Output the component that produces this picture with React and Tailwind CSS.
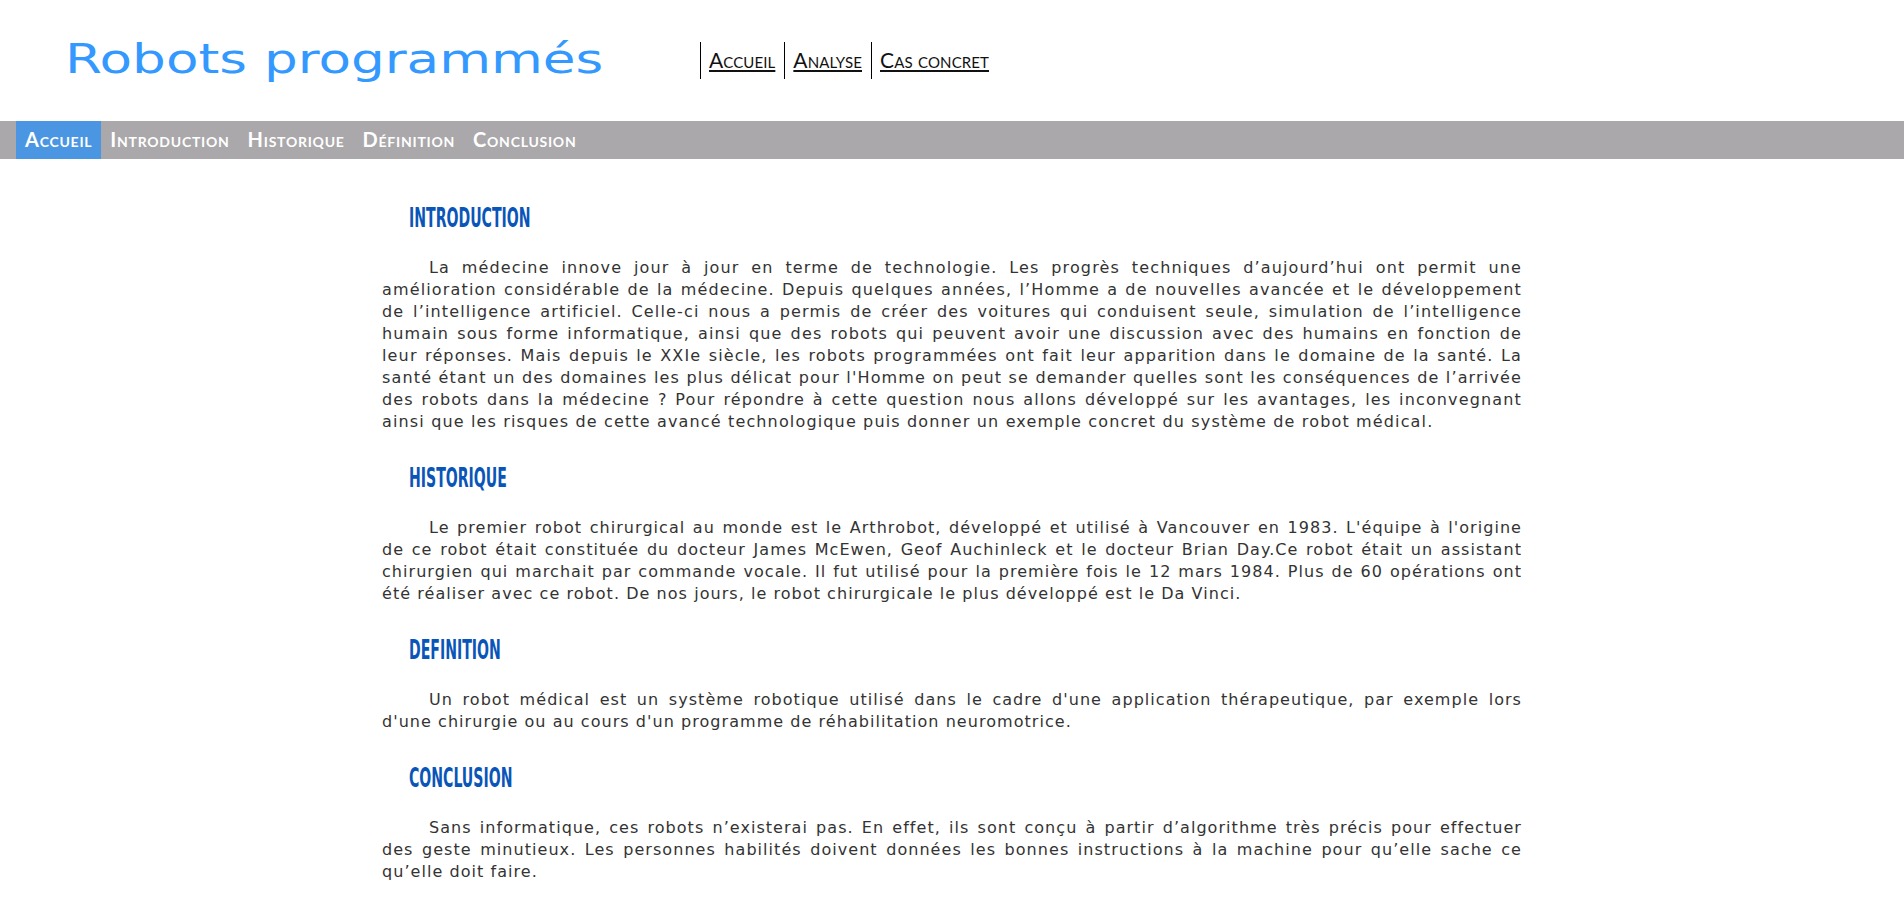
import React from 'react';

const sections = [
  {
    title: 'Introduction',
    track: 'tracking-[1.15px]',
    text: "La médecine innove jour à jour en terme de technologie. Les progrès techniques d’aujourd’hui ont permit une amélioration considérable de la médecine. Depuis quelques années, l’Homme a de nouvelles avancée et le développement de l’intelligence artificiel. Celle-ci nous a permis de créer des voitures qui conduisent seule, simulation de l’intelligence humain sous forme informatique, ainsi que des robots qui peuvent avoir une discussion avec des humains en fonction de leur réponses. Mais depuis le XXIe siècle, les robots programmées ont fait leur apparition dans le domaine de la santé. La santé étant un des domaines les plus délicat pour l'Homme on peut se demander quelles sont les conséquences de l’arrivée des robots dans la médecine ? Pour répondre à cette question nous allons développé sur les avantages, les inconvegnant ainsi que les risques de cette avancé technologique puis donner un exemple concret du système de robot médical.",
  },
  {
    title: 'Historique',
    track: 'tracking-[1.05px]',
    text: "Le premier robot chirurgical au monde est le Arthrobot, développé et utilisé à Vancouver en 1983. L'équipe à l'origine de ce robot était constituée du docteur James McEwen, Geof Auchinleck et le docteur Brian Day.Ce robot était un assistant chirurgien qui marchait par commande vocale. Il fut utilisé pour la première fois le 12 mars 1984. Plus de 60 opérations ont été réaliser avec ce robot. De nos jours, le robot chirurgicale le plus développé est le Da Vinci.",
  },
  {
    title: 'Definition',
    track: 'tracking-[1.05px]',
    text: "Un robot médical est un système robotique utilisé dans le cadre d'une application thérapeutique, par exemple lors d'une chirurgie ou au cours d'un programme de réhabilitation neuromotrice.",
  },
  {
    title: 'Conclusion',
    track: 'tracking-[1.05px]',
    text: "Sans informatique, ces robots n’existerai pas. En effet, ils sont conçu à partir d’algorithme très précis pour effectuer des geste minutieux. Les personnes habilités doivent données les bonnes instructions à la machine pour qu’elle sache ce qu’elle doit faire.",
  },
];

const topLinks = ['Accueil', 'Analyse', 'Cas concret'];
const menu = ['Accueil', 'Introduction', 'Historique', 'Définition', 'Conclusion'];

export default function App() {
  return (
    <div className="min-h-screen bg-white">
      {/* header */}
      <header className="flex h-[121px] items-start">
        <div className="w-[700px] pl-[65px] pt-[39px]">
          <h1 className="inline-block origin-left scale-x-[1.33] font-['DejaVu_Sans',sans-serif] text-[40px] leading-[40px] font-normal text-[#3399ff]">
            Robots programmés
          </h1>
        </div>
        <ul className="mt-[42px] flex">
          {topLinks.map((l) => (
            <li key={l} className="flex h-[37px] items-center border-l border-black pr-[9px] pl-[8px] pb-[3px]">
              <a href="#" className="font-['Lato',sans-serif] text-[21px] leading-none tracking-[0.1px] text-[#111] underline [font-variant:small-caps]">
                {l}
              </a>
            </li>
          ))}
        </ul>
      </header>

      {/* menu bar */}
      <nav className="flex h-[38px] w-full bg-[#aaa8aa] pl-4">
        {menu.map((m, i) => (
          <a
            key={m}
            href="#"
            className={`flex items-center px-[9px] pb-[2px] font-['Lato',sans-serif] text-[20px] font-bold tracking-[0.75px] text-white [font-variant:small-caps] ${
              i === 0 ? 'bg-[#4a96e2]' : ''
            }`}
          >
            {m}
          </a>
        ))}
      </nav>

      {/* content */}
      <main className="mx-auto w-[1140px] pt-[45px] pb-10">
        {sections.map((s, i) => (
          <section key={s.title} className={i === 0 ? '' : 'mt-[31px]'}>
            <h2 className="ml-[27px] h-[27px] text-[#0a55b8]">
              <span className="inline-block origin-left scale-x-[0.58] font-['DejaVu_Sans_Condensed','DejaVu_Sans',sans-serif] text-[27px] leading-[27px] font-bold uppercase">
                {s.title}
              </span>
            </h2>
            <p className={`mt-[26px] indent-[47px] text-justify font-['DejaVu_Sans',sans-serif] text-[16px] leading-[22px] text-[#333] ${s.track}`}>
              {s.text}
            </p>
          </section>
        ))}
      </main>
    </div>
  );
}
